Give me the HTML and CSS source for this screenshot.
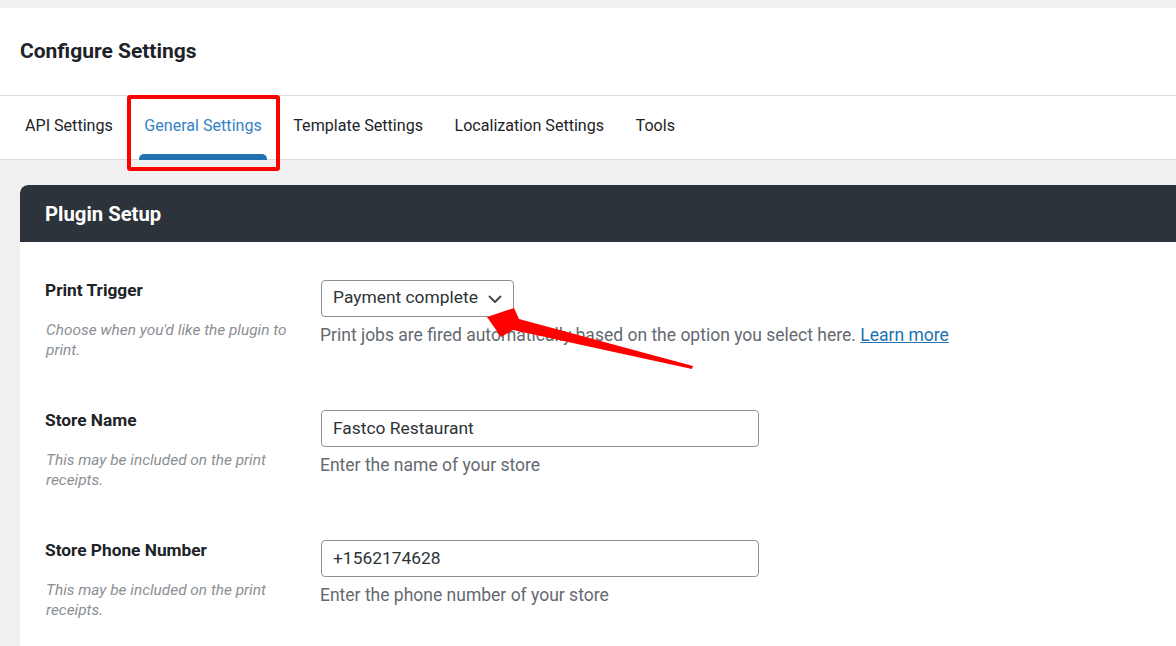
FILE: index.html
```html
<!DOCTYPE html>
<html lang="en">
<head>
<meta charset="utf-8">
<title>Configure Settings</title>
<link rel="stylesheet" href="styles.css">
</head>
<body>
<div class="page">
  <header class="topbar">
    <h1 class="title">Configure Settings</h1>
  </header>
  <nav class="tabs">
    <a class="tab">API Settings</a>
    <a class="tab active">General Settings</a>
    <a class="tab">Template Settings</a>
    <a class="tab">Localization Settings</a>
    <a class="tab">Tools</a>
  </nav>
  <main class="content">
    <section class="card">
      <div class="card-head">Plugin Setup</div>
      <div class="card-body">
        <div class="row">
          <div class="label-col">
            <div class="label">Print Trigger</div>
            <div class="desc">Choose when you'd like the plugin to print.</div>
          </div>
          <div class="field-col">
            <div class="select">
              <span>Payment complete</span>
              <svg class="chev" width="14" height="9" viewBox="0 0 14 9"><path d="M1.5 1.5 L7 7 L12.5 1.5" fill="none" stroke="#3c434a" stroke-width="1.8" stroke-linecap="round" stroke-linejoin="round"/></svg>
            </div>
            <div class="help">Print jobs are fired automatically based on the option you select here. <a class="link">Learn more</a></div>
          </div>
        </div>
        <div class="row">
          <div class="label-col">
            <div class="label">Store Name</div>
            <div class="desc">This may be included on the print receipts.</div>
          </div>
          <div class="field-col">
            <div class="input">Fastco Restaurant</div>
            <div class="help">Enter the name of your store</div>
          </div>
        </div>
        <div class="row">
          <div class="label-col">
            <div class="label">Store Phone Number</div>
            <div class="desc">This may be included on the print receipts.</div>
          </div>
          <div class="field-col">
            <div class="input">+1562174628</div>
            <div class="help">Enter the phone number of your store</div>
          </div>
        </div>
      </div>
    </section>
  </main>
  <div class="highlight"></div>
  <svg class="arrow" width="1176" height="646" viewBox="0 0 1176 646">
    <polygon points="487,317 514,308 519,319 693,366 692,369 513,330 501,337" fill="#ff0000"/>
  </svg>
</div>
</body>
</html>
```
FILE: styles.css
```css
* { box-sizing: border-box; }
html, body { margin: 0; padding: 0; }
body {
  background: #f0f0f1;
  font-family: Roboto, "Liberation Sans", Arial, sans-serif;
  color: #1d2327;
  overflow: hidden;
  width: 1176px;
  height: 646px;
}
.page {
  position: relative;
  padding-top: 8px;
  height: 646px;
  display: flex;
  flex-direction: column;
}
.topbar {
  background: #fff;
  height: 88px;
  flex: none;
  border-bottom: 1px solid #dcdcde;
  display: flex;
  align-items: center;
  padding-left: 20px;
}
.title {
  margin: 0;
  font-size: 21px;
  font-weight: 700;
  color: #1d2327;
  padding-bottom: 2px;
  line-height: 24px;
}
.tabs {
  background: #fff;
  height: 64px;
  flex: none;
  border-bottom: 1px solid #dcdcde;
  display: flex;
  gap: 21.5px;
  padding-left: 20px;
}
.tab {
  display: flex;
  align-items: center;
  padding: 0 5px 4px;
  font-size: 16.1px;
  color: #1d2327;
  position: relative;
}
.tab.active { color: #3582c4; }
.tab.active::after {
  content: "";
  position: absolute;
  left: 0; right: 0; bottom: -1px;
  height: 6px;
  background: #2271b1;
  border-radius: 5px 5px 0 0;
}
.content {
  flex: 1;
  min-height: 0;
  padding: 25px 0 0 20px;
  display: flex;
}
.card {
  flex: 1;
  background: #fff;
  border-radius: 8px 0 0 0;
  overflow: hidden;
}
.card-head {
  background: #2c333a;
  color: #fff;
  height: 57px;
  border-radius: 8px 0 0 0;
  display: flex;
  align-items: center;
  padding-left: 25px;
  font-size: 20.3px;
  font-weight: 700;
}
.card-body {
  padding: 38px 0 0 25px;
  display: flex;
  flex-direction: column;
  gap: 50px;
}
.row {
  display: flex;
}
.label-col {
  width: 275px;
  flex: none;
  padding-right: 20px;
}
.label {
  font-size: 17.3px;
  font-weight: 700;
  line-height: 21px;
  color: #1d2327;
}
.desc {
  margin-top: 19px;
  font-size: 15.4px;
  font-style: italic;
  line-height: 20px;
  color: #8c8f94;
  padding-left: 1px;
}
.select {
  margin-left: 1px;
  width: 193px;
  height: 37px;
  border: 1px solid #8c8f94;
  border-radius: 4px;
  display: flex;
  align-items: center;
  justify-content: space-between;
  padding: 0 11px 3px 11px;
  font-size: 17.4px;
  color: #2c3338;
  background: #fff;
}
.chev { margin-top: 4px; }
.input {
  margin-left: 1px;
  width: 438px;
  height: 37px;
  border: 1px solid #8c8f94;
  border-radius: 4px;
  display: flex;
  align-items: center;
  padding: 0 11px 1px;
  font-size: 17.4px;
  color: #2c3338;
}
.help {
  margin-top: 6px;
  font-size: 17.5px;
  line-height: 24px;
  color: #646970;
}
.link {
  color: #2271b1;
  text-decoration: underline;
}
.highlight {
  position: absolute;
  left: 127px;
  top: 95px;
  width: 153px;
  height: 76px;
  border: 4px solid #ff0000;
  border-radius: 3px;
}
.arrow {
  position: absolute;
  left: 0;
  top: 0;
  pointer-events: none;
}
```
